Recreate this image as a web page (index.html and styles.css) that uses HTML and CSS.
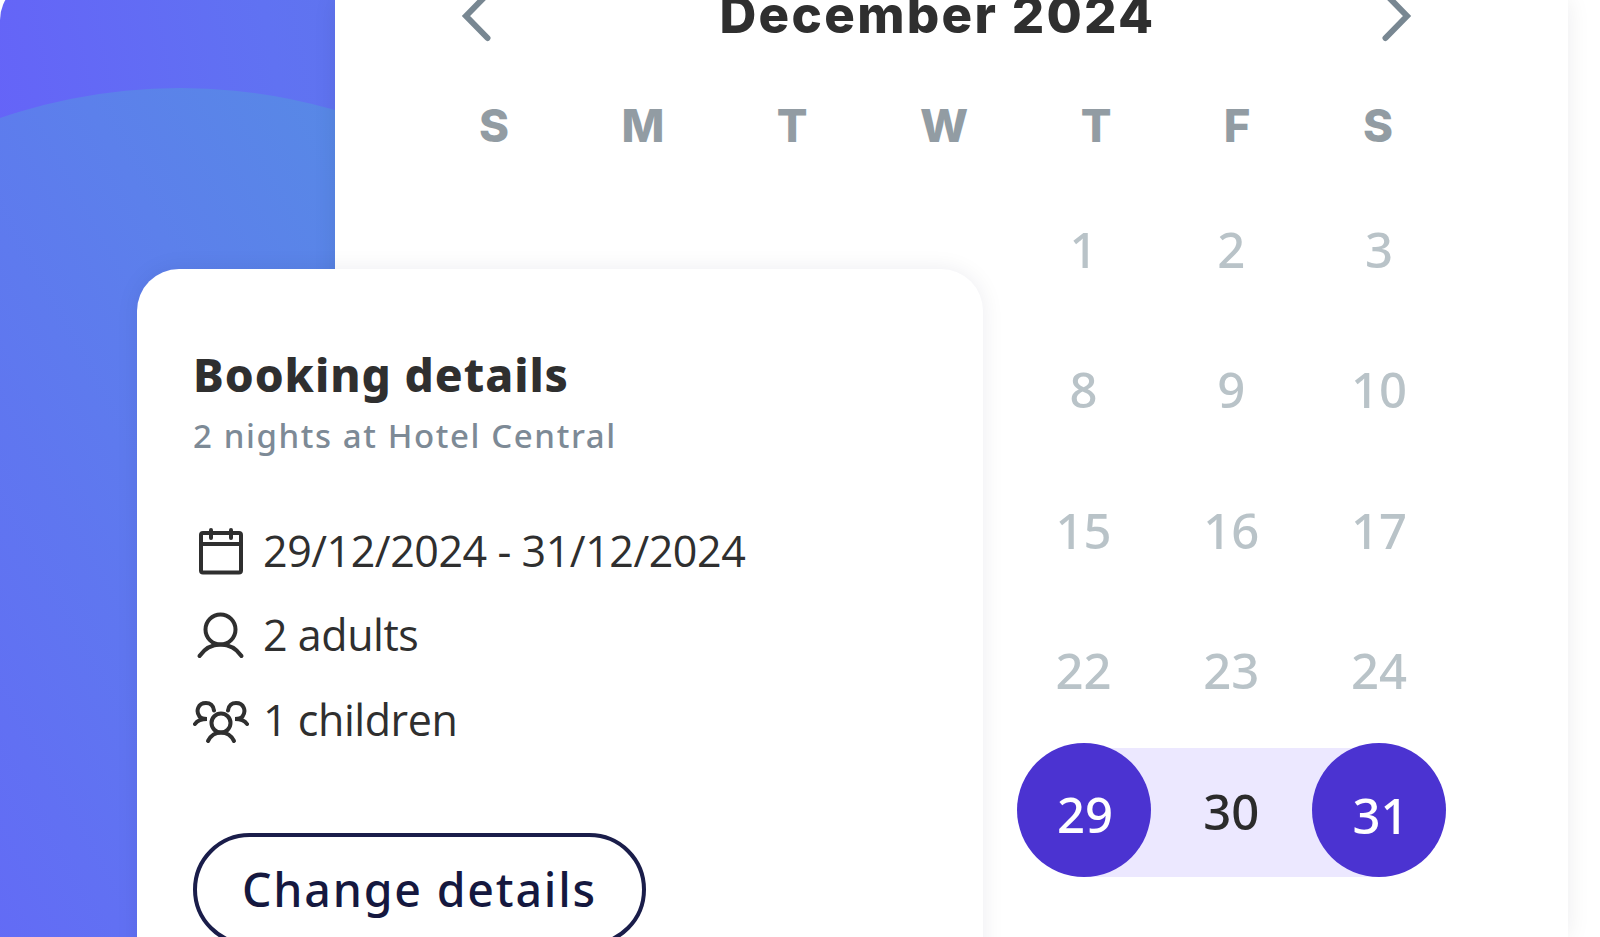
FILE: index.html
```html
<!DOCTYPE html>
<html lang="en">
	<head>
		<meta charset="UTF-8">
		<title>Booking details</title>
		<link rel="stylesheet" href="styles.css">
	</head>
	<body>
		<div class="page">
			<div class="cover"></div>

			<div class="calendar">
				<div class="month">
					<svg class="arrow" viewBox="0 0 32 56"><path d="M27.500 6 L6 28 L27.500 50"/></svg>
					<h1>December 2024</h1>
					<svg class="arrow" viewBox="0 0 32 56"><path d="M4.500 6 L26 28 L4.500 50"/></svg>
				</div>
				<div class="week">
					<span>S</span>
					<span>M</span>
					<span>T</span>
					<span>W</span>
					<span>T</span>
					<span>F</span>
					<span>S</span>
				</div>
				<div class="days">
					<span class="first">1</span>
					<span>2</span>
					<span>3</span>
					<span class="first">8</span>
					<span>9</span>
					<span>10</span>
					<span class="first">15</span>
					<span>16</span>
					<span>17</span>
					<span class="first">22</span>
					<span>23</span>
					<span>24</span>
					<span class="first range start"><b>29</b></span>
					<span class="range">30</span>
					<span class="range end"><b>31</b></span>
				</div>
			</div>

			<div class="card">
				<h2>Booking details</h2>
				<p class="sub">2 nights at Hotel Central</p>
				<ul class="info">
					<li>
						<svg viewBox="0 0 56 56">
							<rect x="8" y="8" width="40" height="39.500" rx="2"/>
							<path d="M8 19H48M18 5v8M38 5v8"/>
						</svg>
						29/12/2024 - 31/12/2024
					</li>
					<li>
						<svg viewBox="0 0 56 56">
							<circle cx="27.500" cy="20.500" r="15"/>
							<path d="M6.500 47C12 39 19 35.500 27.500 35.500S43 39 48.500 47"/>
						</svg>
						2 adults
					</li>
					<li>
						<svg viewBox="0 0 56 56">
							<circle cx="28" cy="29" r="9.500"/>
							<path d="M15 47C17.500 42 22 38.500 28 38.500S38.500 42 41 47"/>
							<path d="M21 16.500C20.500 11.500 17 9 13 9C5 9 2.500 17 6.500 22.500C8 24.500 10 25 14 25C8 25 4 27 2 30"/>
							<path d="M35 16.500C35.500 11.500 39 9 43 9C51 9 53.500 17 49.500 22.500C48 24.500 46 25 42 25C48 25 52 27 54 30"/>
						</svg>
						1 children
					</li>
				</ul>
				<a class="btn">Change details</a>
			</div>
		</div>
	</body>
</html>
```
FILE: styles.css
```css
*{
	padding: 0;
	margin: 0;
	box-sizing: border-box;
}

body {
	background: #fff;
	overflow: hidden;
	font-family: "Noto Sans", "Open Sans", sans-serif;
	color: #2f2f2f;
}

.page {
	display: flex;
	position: relative;
	width: 1600px;
	height: 937px;
	overflow: hidden;
}

/* blue side with the big circle in it */
.cover {
	width: 335px;
	height: 977px;
	margin-top: -20px;
	border-radius: 40px 0 0 0;
	background: linear-gradient(80deg, #6563f8 25%, #6072f2 85%, #5f74ef 100%);
	overflow: hidden;
}

.cover::before {
	content: "";
	display: block;
	width: 1112px;
	height: 1112px;
	margin: 108px 0 0 -376px;
	border-radius: 50%;
	background: linear-gradient(61deg, #636af6 28%, #5c80eb 62%, #5888e6 76%);
}

.calendar {
	width: 1233px;
	height: 937px;
	background: #fff;
	box-shadow: 0 0 22px rgba(20, 20, 40, 0.08);
}

.month {
	display: flex;
	justify-content: space-between;
	align-items: center;
	height: 64px;
	margin: -16px 155px 0 125px;
}

.month h1 {
	padding: 0 0 3px 2px;
	font-family: "Inter", "Liberation Sans", sans-serif;
	font-size: 51px;
	font-weight: 800;
	line-height: 60px;
	letter-spacing: 2.3px;
}

.arrow {
	width: 32px;
	height: 56px;
	fill: none;
	stroke: #788792;
	stroke-width: 6;
	stroke-linecap: round;
}

.week {
	display: flex;
	justify-content: space-between;
	margin: 48px 175px 0 144px;
	font-family: "Inter", "Liberation Sans", sans-serif;
	font-size: 45.5px;
	font-weight: 800;
	line-height: 60px;
	color: #929ca3;
}

.days {
	display: grid;
	grid-template-columns: repeat(7, 147.7px);
	grid-auto-rows: 140.5px;
	margin: 22.5px 0 0 84px;
	font-size: 49px;
	font-weight: 500;
	color: #b9c3c8;
}

.days span {
	display: flex;
	justify-content: center;
	align-items: center;
}

.days .first {
	grid-column: 5;
}

.days .range {
	margin: 7.5px 0 4px;
	padding-bottom: 4px;
	background: #ece8ff;
	color: #2b2b2b;
}

.days .start {
	background: linear-gradient(90deg, #fff 50%, #ece8ff 50%);
}

.days .end {
	background: linear-gradient(90deg, #ece8ff 50%, #fff 50%);
}

.days .start,
.days .end {
	align-items: flex-end;
	padding: 0;
}

.range b {
	flex: none;
	width: 134px;
	height: 134px;
	padding: 4px 0 0 3px;
	border-radius: 50%;
	background: #4b33d1;
	color: #fff;
	font-weight: 500;
	line-height: 134px;
	text-align: center;
}

.end b {
	padding-top: 5px;
}

/* card lies over the calendar and the blue side */
.card {
	position: absolute;
	left: 137px;
	top: 269px;
	width: 846px;
	height: 760px;
	padding: 75px 57px;
	border-radius: 42px;
	background: #fff;
	box-shadow: 0 0 22px rgba(20, 20, 70, 0.08);
}

.card h2 {
	margin-left: -1px;
	font-size: 46px;
	font-weight: 800;
	line-height: 60px;
	letter-spacing: 0.95px;
}

.sub {
	margin: 7px 0 0 -1px;
	font-size: 33px;
	font-weight: 500;
	line-height: 50px;
	letter-spacing: 1.6px;
	color: #7d8a96;
}

.info {
	margin: 48px 0 0 -1px;
	list-style: none;
	font-family: "Open Sans", "Noto Sans", sans-serif;
	font-size: 43px;
	letter-spacing: -0.45px;
}

.info li {
	display: flex;
	align-items: center;
	gap: 14px;
	height: 84.3px;
	line-height: 84px;
}

.info svg {
	width: 56px;
	height: 56px;
	margin-top: 4px;
	fill: none;
	stroke: #2f2f2f;
	stroke-width: 4;
	stroke-linecap: round;
}

.btn {
	display: inline-block;
	width: 453px;
	height: 113px;
	margin: 71px 0 0 -1px;
	border: 4px solid #1a1d4a;
	border-radius: 57px;
	color: #15183f;
	font-size: 46.5px;
	font-weight: 500;
	line-height: 104px;
	letter-spacing: 1.8px;
	text-align: center;
}
```
